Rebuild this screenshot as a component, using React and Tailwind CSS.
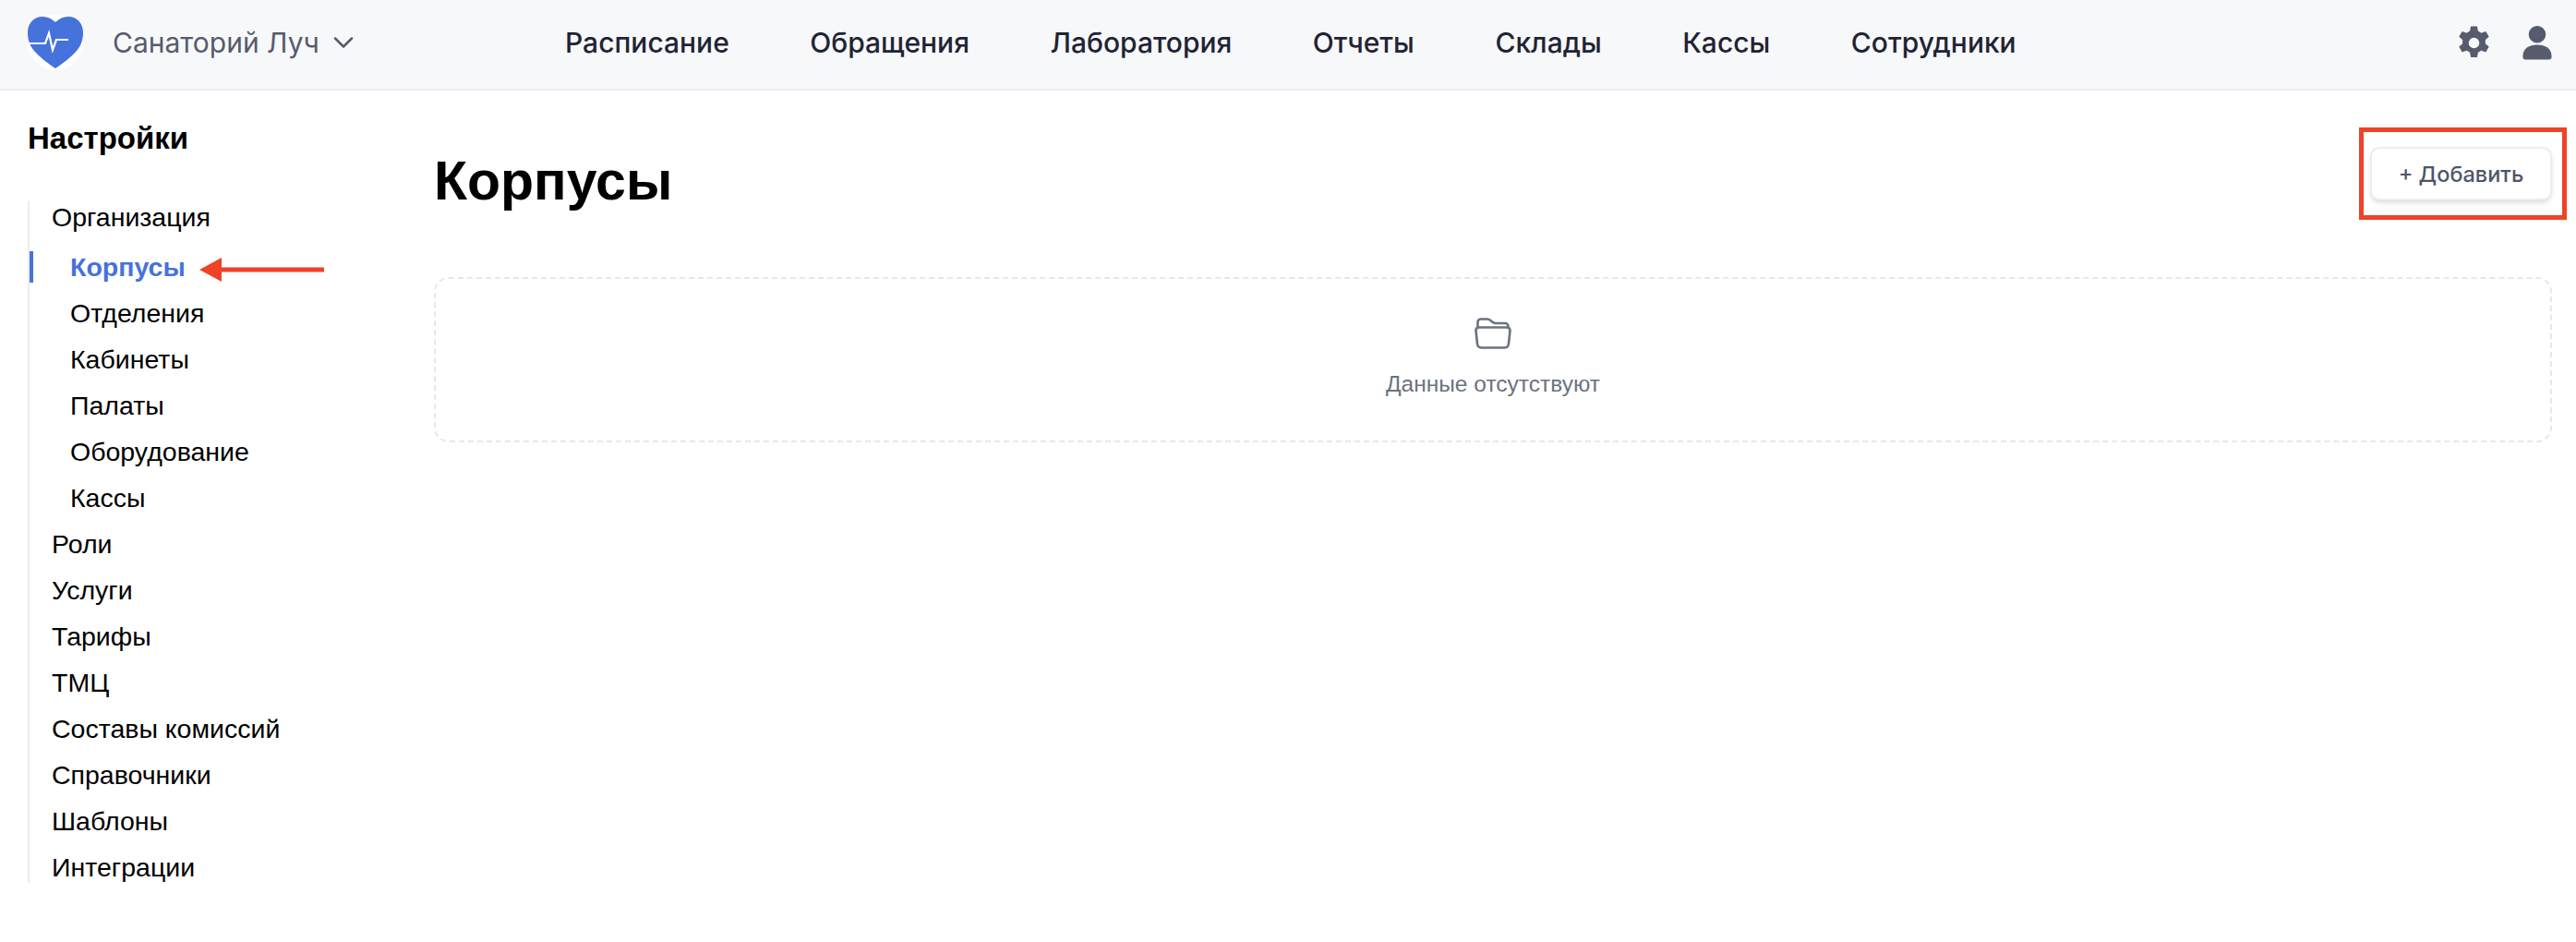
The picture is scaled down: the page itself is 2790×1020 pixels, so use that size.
import React from "react";
import { ChevronDown } from "lucide-react";

const navItems = ["Расписание", "Обращения", "Лаборатория", "Отчеты", "Склады", "Кассы", "Сотрудники"];

const orgItems = ["Корпусы", "Отделения", "Кабинеты", "Палаты", "Оборудование", "Кассы"];
const otherItems = ["Роли", "Услуги", "Тарифы", "ТМЦ", "Составы комиссий", "Справочники", "Шаблоны", "Интеграции"];

function HeartLogo() {
  return (
    <svg width="60" height="60" viewBox="0 0 60 60" className="shrink-0">
      <circle cx="30" cy="30" r="30" fill="#fff" />
      <path
        d="M30 8 C26 4 21 2 16 2 C7 2 0 9 0 19 C0 27 2 33 7 39 C12 45 22 53 30 58 C38 53 48 45 53 39 C58 33 60 27 60 19 C60 9 53 2 44 2 C39 2 34 4 30 8 Z"
        fill="#4672DC"
      />
      <path
        d="M2 31 H19 L23 20 L27 38 L31 27 H44"
        fill="none"
        stroke="#fff"
        strokeWidth="2.2"
      />
    </svg>
  );
}

function GearIcon() {
  return (
    <svg width="41" height="41" viewBox="0 0 24 24" fill="#565B6E">
      <path
        fillRule="evenodd"
        d="M10 1.5h4l.6 3a8 8 0 0 1 2 1.15l2.9-1 2 3.45-2.3 2a8 8 0 0 1 0 2.3l2.3 2-2 3.45-2.9-1a8 8 0 0 1-2 1.15l-.6 3h-4l-.6-3a8 8 0 0 1-2-1.15l-2.9 1-2-3.45 2.3-2a8 8 0 0 1 0-2.3l-2.3-2 2-3.45 2.9 1a8 8 0 0 1 2-1.15zM12 8.6a3.4 3.4 0 1 0 0 6.8 3.4 3.4 0 0 0 0-6.8z"
      />
    </svg>
  );
}

function UserIcon() {
  return (
    <svg width="32" height="37" viewBox="0 0 32 38" fill="#565B6E">
      <circle cx="16" cy="9.5" r="9.5" />
      <path d="M0 34 C0 25 7 21 16 21 C25 21 32 25 32 34 C32 37 31 37.5 29 37.5 H3 C1 37.5 0 37 0 34 Z" />
    </svg>
  );
}

function FolderIcon() {
  return (
    <svg width="40" height="34" viewBox="0 0 40 34" fill="none" stroke="#6B7280" strokeWidth="2.6" strokeLinejoin="round">
      <path d="M3.5 10 V5 C3.5 3 5 1.5 7 1.5 H14 C16 1.5 17 2.5 18.5 4 C20 5.5 21 6 23 6 H33 C35 6 36.5 7.5 36.5 9.5 V11" />
      <path d="M1.5 14 C1.5 11.5 3 10.5 5 10.5 H35 C37 10.5 38.5 11.5 38.5 14 L37 28 C36.8 30.8 35 32.5 32.5 32.5 H7.5 C5 32.5 3.2 30.8 3 28 Z" />
    </svg>
  );
}

export default function App() {
  return (
    <div className="relative min-h-[1020px] bg-white font-['Liberation_Sans',sans-serif] text-black">
      {/* шапка */}
      <header className="flex h-[98px] items-center border-b-2 border-[#ECECF2] bg-[#F7F8FA] pb-[4px] pl-[30px] pr-[26px] font-['Inter',sans-serif]">
        <HeartLogo />
        <button className="ml-[32px] flex w-[490px] items-center gap-[8px] text-[30px] text-[#565B6E]">
          Санаторий Луч
          <ChevronDown size={36} strokeWidth={1.7} />
        </button>
        <nav className="flex flex-1 items-center gap-[87.5px]">
          {navItems.map((item, index) => (
            <a key={index} className="text-[30px] font-medium text-[#1F2433]">
              {item}
            </a>
          ))}
        </nav>
        <div className="flex items-center gap-[32px]">
          <GearIcon />
          <UserIcon />
        </div>
      </header>

      <div className="flex">
        {/* боковое меню */}
        <aside className="w-[470px] shrink-0 pl-[30px] pt-[32px]">
          <h2 className="text-[33px] font-bold leading-[40px]">Настройки</h2>
          <ul className="mt-[48px] flex w-[400px] flex-col gap-[16px] border-l-2 border-[#ECECF2] text-[28.5px] leading-[34px]">
            <li className="pl-[24px]">Организация</li>
            <ul className="mt-[4px] flex flex-col gap-[16px]">
              {orgItems.map((item, index) => (
                <li
                  key={index}
                  className={
                    index === 0
                      ? "relative pl-[44px] font-bold text-[#4672DC]"
                      : "pl-[44px]"
                  }
                >
                  {index === 0 && <span className="absolute left-0 top-0 h-[34px] w-[4px] bg-[#4672DC]"></span>}
                  {item}
                </li>
              ))}
            </ul>
            {otherItems.map((item, index) => (
              <li key={index} className="pl-[24px]">
                {item}
              </li>
            ))}
          </ul>
        </aside>

        {/* контент */}
        <main className="flex-1 pr-[26px] pt-[61px]">
          <div className="flex items-start justify-between">
            <h1 className="mt-[2px] text-[59px] font-bold leading-[70px]">Корпусы</h1>
            <button className="flex h-[58px] w-[197px] items-center justify-center rounded-[10px] border-2 border-[#ECECF2] bg-white pt-[2px] font-['Inter',sans-serif] text-[23.5px] font-medium text-[#50556A] shadow-md">
              + Добавить
            </button>
          </div>
          <div className="mt-[69px] flex h-[179px] flex-col items-center justify-center rounded-[16px] border-2 border-dashed border-[#E6E7EE]">
            <FolderIcon />
            <p className="mt-[20px] text-[24.5px] text-[#6B7280]">Данные отсутствуют</p>
          </div>
        </main>
      </div>

      {/* аннотации поверх скриншота */}
      <div className="absolute left-[2555px] top-[138px] h-[100px] w-[225px] border-[5px] border-[#EE4326]"></div>
      <svg className="absolute left-[214px] top-[278px]" width="137" height="28" viewBox="0 0 137 28">
        <polygon points="2,14 26,1 26,27" fill="#EE4326" />
        <rect x="24" y="11.5" width="113" height="5" fill="#EE4326" />
      </svg>
    </div>
  );
}
